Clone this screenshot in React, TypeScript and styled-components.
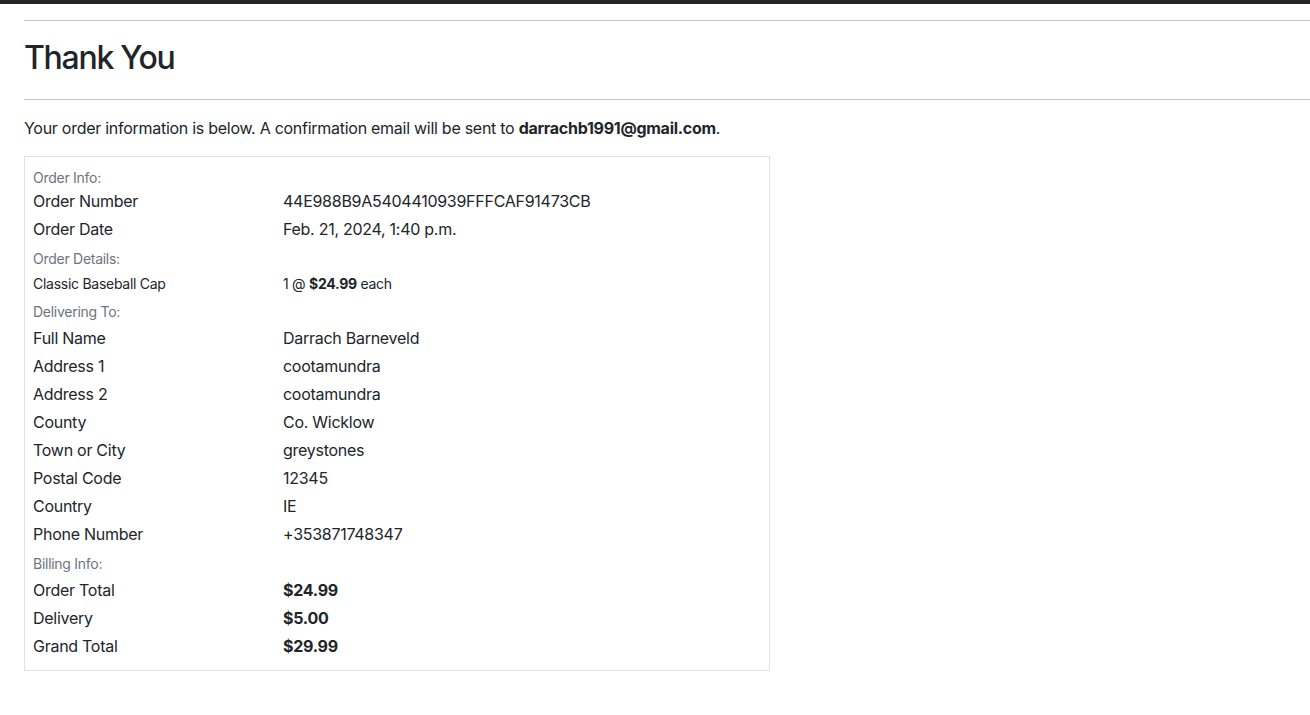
import React from "react";
import styled, { createGlobalStyle } from "styled-components";

const Global = createGlobalStyle`
  html, body { margin: 0; padding: 0; background: #fff; }
  body {
    font-family: Inter, "Liberation Sans", sans-serif;
    color: #212529;
    font-size: 16px;
    line-height: 1.5;
    letter-spacing: -0.017em;
  }
  * { box-sizing: border-box; }
`;

const TopBar = styled.div`
  height: 4px;
  background: #212529;
`;

const Page = styled.main`
  padding: 16px 0 0 24px;
`;

const Rule = styled.hr`
  margin: 0;
  border: 0;
  border-top: 1px solid #c8c9ca;
`;

const Title = styled.h1`
  margin: 0;
  padding: 18px 0 22px;
  font-size: 32px;
  font-weight: 500;
  line-height: 1.2;
  letter-spacing: -0.04em;
`;

const Intro = styled.p`
  margin: 16px 0 16px;
  font-size: 16px;
`;

const Card = styled.div`
  width: 746px;
  border: 1px solid #dee2e6;
  padding: 12px 8px 10px;
`;

const Grid = styled.div`
  display: grid;
  grid-template-columns: 250px 1fr;
`;

const Section = styled.div<{ $first?: boolean }>`
  grid-column: 1 / -1;
  font-size: 14px;
  color: #6c757d;
  line-height: ${(p) => (p.$first ? "18px" : "21px")};
  padding: ${(p) => (p.$first ? "0" : "5px 0 2px")};
`;

const Cell = styled.div<{ $small?: boolean; $bold?: boolean }>`
  font-size: ${(p) => (p.$small ? "14px" : "16px")};
  font-weight: ${(p) => (p.$bold ? 700 : 400)};
  line-height: ${(p) => (p.$small ? "21px" : "24px")};
  padding: 2px 0;
`;

export default function App() {
  return (
    <>
      <Global />
      <TopBar />
      <Page>
        <Rule />
        <Title>Thank You</Title>
        <Rule />
        <Intro>
          Your order information is below. A confirmation email will be sent to{" "}
          <strong>darrachb1991@gmail.com</strong>.
        </Intro>
        <Card>
          <Grid>
            <Section $first>Order Info:</Section>
            <Cell>Order Number</Cell>
            <Cell>44E988B9A5404410939FFFCAF91473CB</Cell>
            <Cell>Order Date</Cell>
            <Cell>Feb. 21, 2024, 1:40 p.m.</Cell>
            <Section>Order Details:</Section>
            <Cell $small>Classic Baseball Cap</Cell>
            <Cell $small>
              1 @ <strong>$24.99</strong> each
            </Cell>
            <Section>Delivering To:</Section>
            <Cell>Full Name</Cell>
            <Cell>Darrach Barneveld</Cell>
            <Cell>Address 1</Cell>
            <Cell>cootamundra</Cell>
            <Cell>Address 2</Cell>
            <Cell>cootamundra</Cell>
            <Cell>County</Cell>
            <Cell>Co. Wicklow</Cell>
            <Cell>Town or City</Cell>
            <Cell>greystones</Cell>
            <Cell>Postal Code</Cell>
            <Cell>12345</Cell>
            <Cell>Country</Cell>
            <Cell>IE</Cell>
            <Cell>Phone Number</Cell>
            <Cell>+353871748347</Cell>
            <Section>Billing Info:</Section>
            <Cell>Order Total</Cell>
            <Cell $bold>$24.99</Cell>
            <Cell>Delivery</Cell>
            <Cell $bold>$5.00</Cell>
            <Cell>Grand Total</Cell>
            <Cell $bold>$29.99</Cell>
          </Grid>
        </Card>
      </Page>
    </>
  );
}
